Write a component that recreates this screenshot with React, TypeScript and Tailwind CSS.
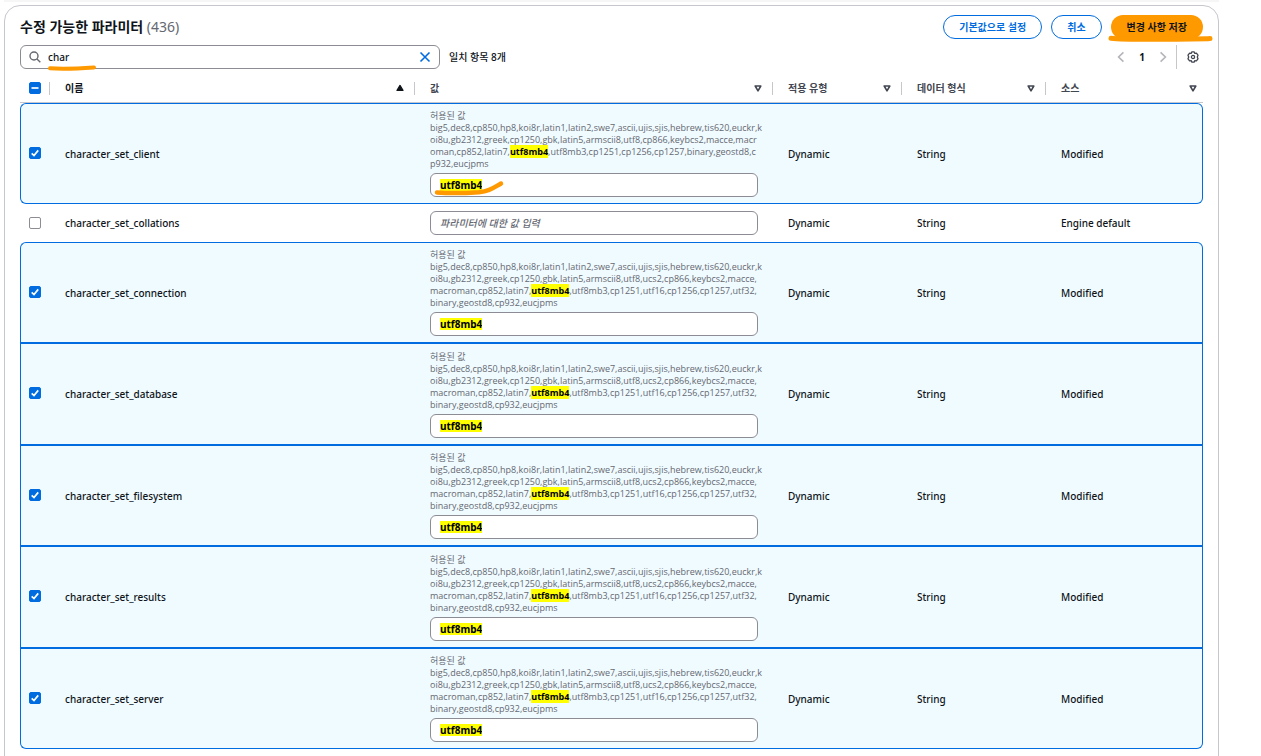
import React from 'react';

type Parameter = {
  name: string;
  allowed?: string[];
  value: string;
  source: string;
  selected: boolean;
  marked?: boolean;
};

const CLIENT_CHARSETS = [
  'big5,dec8,cp850,hp8,koi8r,latin1,latin2,swe7,ascii,ujis,sjis,hebrew,tis620,euckr,k',
  'oi8u,gb2312,greek,cp1250,gbk,latin5,armscii8,utf8,cp866,keybcs2,macce,macr',
  'oman,cp852,latin7,utf8mb4,utf8mb3,cp1251,cp1256,cp1257,binary,geostd8,c',
  'p932,eucjpms',
];

const SERVER_CHARSETS = [
  'big5,dec8,cp850,hp8,koi8r,latin1,latin2,swe7,ascii,ujis,sjis,hebrew,tis620,euckr,k',
  'oi8u,gb2312,greek,cp1250,gbk,latin5,armscii8,utf8,ucs2,cp866,keybcs2,macce,',
  'macroman,cp852,latin7,utf8mb4,utf8mb3,cp1251,utf16,cp1256,cp1257,utf32,',
  'binary,geostd8,cp932,eucjpms',
];

const parameters: Parameter[] = [
  { name: 'character_set_client', allowed: CLIENT_CHARSETS, value: 'utf8mb4', source: 'Modified', selected: true, marked: true },
  { name: 'character_set_collations', value: '', source: 'Engine default', selected: false },
  { name: 'character_set_connection', allowed: SERVER_CHARSETS, value: 'utf8mb4', source: 'Modified', selected: true },
  { name: 'character_set_database', allowed: SERVER_CHARSETS, value: 'utf8mb4', source: 'Modified', selected: true },
  { name: 'character_set_filesystem', allowed: SERVER_CHARSETS, value: 'utf8mb4', source: 'Modified', selected: true },
  { name: 'character_set_results', allowed: SERVER_CHARSETS, value: 'utf8mb4', source: 'Modified', selected: true },
  { name: 'character_set_server', allowed: SERVER_CHARSETS, value: 'utf8mb4', source: 'Modified', selected: true },
];

const columns = [
  { title: '이름', width: 'w-[365px]', sorted: true },
  { title: '값', width: 'w-[358px]' },
  { title: '적용 유형', width: 'w-[129px]' },
  { title: '데이터 형식', width: 'w-[144px]' },
  { title: '소스', width: '' },
];

function Checkbox({ label, checked, mixed }: { label: string; checked?: boolean; mixed?: boolean }) {
  return (
    <span className="grid h-3 w-3 *:col-start-1 *:row-start-1">
      <input
        type="checkbox"
        aria-label={label}
        defaultChecked={checked}
        className="peer h-3 w-3 appearance-none rounded-xs border border-[#8c8c94] bg-white checked:border-[#006ce0] checked:bg-[#006ce0]"
      />
      <svg viewBox="0 0 12 12" className="pointer-events-none hidden h-3 w-3 peer-checked:block" fill="none" stroke="white" strokeWidth="1.7">
        {mixed ? <path d="M2.5 6h7" /> : <path d="M2.7 6.3 5 8.6 9.2 3.4" />}
      </svg>
    </span>
  );
}

function SortIcon({ sorted }: { sorted?: boolean }) {
  return (
    <svg viewBox="0 0 10 10" className="h-[10px] w-[10px]" strokeWidth="1.6" strokeLinejoin="round">
      {sorted ? (
        <path d="M5 2.4 8 7.4H2z" fill="#0f141a" stroke="#0f141a" strokeWidth="1.2" />
      ) : (
        <path d="M5 7.8 2.2 3h5.6z" fill="none" stroke="#424650" />
      )}
    </svg>
  );
}

function AllowedLine({ text }: { text: string }) {
  const [before, after] = text.split('utf8mb4');
  return (
    <span className="block">
      {before}
      {after !== undefined && (
        <>
          <mark className="bg-[#ffff00] font-bold text-black">utf8mb4</mark>
          {after}
        </>
      )}
    </span>
  );
}

function ValueCell({ param }: { param: Parameter }) {
  return (
    <div className="relative">
      {param.allowed && (
        <div className="mb-[3px] font-['Open_Sans','Noto_Sans_CJK_KR',sans-serif] text-[9px] leading-3 font-normal whitespace-nowrap text-[#656871]">
          <span className="block">허용된 값</span>
          {param.allowed.map((line) => (
            <AllowedLine key={line} text={line} />
          ))}
        </div>
      )}
      <label className="flex h-6 items-center rounded-md border border-[#8c8c94] bg-white px-[9px]">
        {param.value ? (
          <input
            aria-label={param.name}
            defaultValue={param.value}
            className="field-sizing-content h-3 bg-[#ffff00] font-bold text-black outline-none"
          />
        ) : (
          <input
            aria-label={param.name}
            placeholder="파라미터에 대한 값 입력"
            className="h-4 w-full outline-none placeholder:text-[#656871] placeholder:italic"
          />
        )}
      </label>
      {param.marked && (
        <svg viewBox="0 0 72 18" className="pointer-events-none absolute bottom-0 left-[3px] h-[18px] w-[72px]" fill="none" stroke="#ff9900" strokeWidth="4.5" strokeLinecap="round">
          <path d="M4 13.5C18 14.5 34 14 46 13.2 56 12.3 60 9 68 4.5" />
        </svg>
      )}
    </div>
  );
}

function ParameterRow({ param, index }: { param: Parameter; index: number }) {
  const first = param.selected && !parameters[index - 1]?.selected;
  const last = param.selected && !parameters[index + 1]?.selected;
  const cell = param.selected ? 'border-y border-[#006ce0] bg-[#f0fbff]' : '';
  const left = `${param.selected ? 'border-l' : ''} ${first ? 'rounded-tl-md' : ''} ${last ? 'rounded-bl-md' : ''}`;
  const right = `${param.selected ? 'border-r' : ''} ${first ? 'rounded-tr-md' : ''} ${last ? 'rounded-br-md' : ''}`;

  return (
    <tr className={param.selected ? 'odd:h-[101px] even:h-[102px]' : 'h-[38px]'}>
      <td className={`${cell} ${left} ${param.selected ? 'pb-[2px] pl-2' : 'pl-[9px]'}`}>
        <Checkbox label={param.name} checked={param.selected} />
      </td>
      <td className={`${cell} pl-[15px]`}>{param.name}</td>
      <td className={`${cell} px-[15px]`}>
        <ValueCell param={param} />
      </td>
      <td className={`${cell} pl-[15px]`}>Dynamic</td>
      <td className={`${cell} pl-[15px]`}>String</td>
      <td className={`${cell} ${right} pl-[15px]`}>{param.source}</td>
    </tr>
  );
}

export default function App() {
  return (
    <div className="h-screen overflow-hidden bg-white pr-[42px] pl-1 font-['Noto_Sans','Noto_Sans_CJK_KR',sans-serif] text-[10px] leading-4 font-medium text-[#0f141a]">
      <div className="mb-[3px] h-[2px] bg-[#f6f6f7]" />
      <main className="h-screen rounded-t-2xl border border-[#c6c6cd] px-[15px] pt-[9px]">
        <header className="flex items-center">
          <h1 className="flex-1 text-[14px] leading-6 font-bold">
            수정 가능한 파라미터 <span className="font-normal text-[#656871]">(436)</span>
          </h1>
          <div className="flex gap-[9px] font-bold">
            <button className="h-6 rounded-full border border-[#006ce0] px-[15px] text-[#006ce0]">기본값으로 설정</button>
            <button className="h-6 rounded-full border border-[#006ce0] px-[15px] text-[#006ce0]">취소</button>
            <div className="relative">
              <button className="h-6 rounded-full bg-[#ff9900] px-4">변경 사항 저장</button>
              <svg viewBox="0 0 106 8" className="pointer-events-none absolute top-5 -left-[3px] h-2 w-[106px]" fill="none" stroke="#ff9900" strokeWidth="5" strokeLinecap="round">
                <path d="M3 3.2C20 5.2 60 4.4 102 3.6" />
              </svg>
            </div>
          </div>
        </header>

        <div className="mt-[6px] flex items-center">
          <label className="relative flex h-6 w-[420px] items-center rounded-md border border-[#8c8c94] px-2">
            <svg viewBox="0 0 12 12" className="h-3 w-3" fill="none" stroke="#656871" strokeWidth="1.4">
              <circle cx="5" cy="5" r="4" />
              <path d="m8 8 3.3 3.3" />
            </svg>
            <input aria-label="파라미터 검색" defaultValue="char" className="ml-[7px] h-4 flex-1 outline-none" />
            <button aria-label="지우기">
              <svg viewBox="0 0 12 12" className="h-3 w-3" fill="none" stroke="#006ce0" strokeWidth="1.6">
                <path d="m1.5 1.5 9 9m0-9-9 9" />
              </svg>
            </button>
            <svg viewBox="0 0 50 6" className="pointer-events-none absolute -bottom-[3px] left-[26px] h-[6px] w-[50px]" fill="none" stroke="#ff9900" strokeWidth="4" strokeLinecap="round">
              <path d="M3 3.3C16 4.2 32 3.5 47 2.5" />
            </svg>
          </label>
          <span className="ml-[9px] flex-1">일치 항목 8개</span>
          <nav className="flex items-center">
            <button aria-label="이전 페이지">
              <svg viewBox="0 0 12 12" className="h-3 w-3" fill="none" stroke="#b4b4bb" strokeWidth="1.6">
                <path d="M8.4 1.4 3.6 6l4.8 4.6" />
              </svg>
            </button>
            <button className="w-[30px] text-center font-bold">1</button>
            <button aria-label="다음 페이지">
              <svg viewBox="0 0 12 12" className="h-3 w-3" fill="none" stroke="#b4b4bb" strokeWidth="1.6">
                <path d="M3.6 1.4 8.4 6l-4.8 4.6" />
              </svg>
            </button>
          </nav>
          <span className="ml-[7px] h-6 w-px bg-[#c6c6cd]" />
          <button aria-label="설정" className="mr-1 ml-[10px]">
            <svg viewBox="0 0 12 12" className="h-3 w-3" fill="none" stroke="#424650" strokeWidth="1.3" strokeLinejoin="round">
              <path d="M4.9.8h2.2l.6 1.5 1.7-.2 1.6 2.1L10.3 6l.7 1.8-1.6 2.1-1.7-.2-.6 1.5H4.9l-.6-1.5-1.7.2L1 7.8 1.7 6 1 4.2l1.6-2.1 1.7.2z" />
              <circle cx="6" cy="6" r="1.6" />
            </svg>
          </button>
        </div>

        <table className="mt-[5px] w-full table-fixed border-separate border-spacing-0 text-left">
          <thead>
            <tr className="h-[29px]">
              <th className="w-[30px] border-b border-[#c6c6cd] pl-[9px]">
                <div className="flex items-center justify-between">
                  <Checkbox label="모두 선택" checked mixed />
                  <span className="h-[13px] w-px bg-[#c6c6cd]" />
                </div>
              </th>
              {columns.map((column, i) => (
                <th key={column.title} className={`${column.width} border-b border-[#c6c6cd] pl-[15px] font-bold`}>
                  <div className="flex items-center">
                    <span className={column.sorted ? 'flex-1' : 'flex-1 text-[#424650]'}>{column.title}</span>
                    <button aria-label={`${column.title} 정렬`} className={i === columns.length - 1 ? 'mr-[5px]' : 'mr-[9px]'}>
                      <SortIcon sorted={column.sorted} />
                    </button>
                    {i < columns.length - 1 && <span className="h-[13px] w-px bg-[#c6c6cd]" />}
                  </div>
                </th>
              ))}
            </tr>
          </thead>
          <tbody>
            {parameters.map((param, i) => (
              <ParameterRow key={param.name} param={param} index={i} />
            ))}
          </tbody>
        </table>
      </main>
    </div>
  );
}
